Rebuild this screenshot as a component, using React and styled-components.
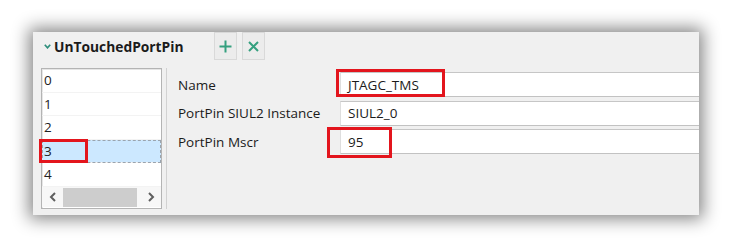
import React from "react";
import styled, { createGlobalStyle } from "styled-components";

const Global = createGlobalStyle`
  html, body { margin: 0; padding: 0; background: #ffffff; }
  body { font-family: "Open Sans", "Noto Sans", "Liberation Sans", sans-serif; }
`;

const Page = styled.div`
  width: 731px;
  height: 247px;
  padding: 32px 0 0 33px;
  box-sizing: border-box;
`;

const Panel = styled.div`
  width: 666px;
  height: 183px;
  background: #f0f0f0;
  box-shadow: 0 0 16px 4px rgba(0, 0, 0, 0.48);
  display: flex;
  flex-direction: column;
`;

const Header = styled.div`
  height: 36px;
  display: flex;
  align-items: flex-start;
  padding-left: 11px;
`;

const TitleWrap = styled.div`
  display: flex;
  align-items: center;
  height: 28px;
  width: 170px;
`;

const Chevron = styled.svg`
  width: 7px;
  height: 5px;
  margin-right: 3px;
  margin-top: 1px;
`;

const Title = styled.span`
  font-weight: 700;
  font-size: 13.8px;
  color: #1b1b1b;
`;

const Tools = styled.div`
  display: flex;
  gap: 5px;
`;

const ToolButton = styled.div`
  width: 23px;
  height: 28px;
  box-sizing: border-box;
  background: #ececec;
  border: 1px solid #d9d9d9;
  display: flex;
  align-items: center;
  justify-content: center;
`;

const Body = styled.div`
  display: flex;
  padding-left: 8px;
`;

const List = styled.div`
  width: 121px;
  height: 141px;
  box-sizing: border-box;
  border: 1px solid #b4b4b4;
  box-shadow: inset 1px 1px 0 #e6e6e6;
  background: #ffffff;
  display: flex;
  flex-direction: column;
`;

const Row = styled.div`
  position: relative;
  height: 23.5px;
  box-sizing: border-box;
  padding-left: 2px;
  display: flex;
  align-items: center;
  font-size: 13.5px;
  color: #222;
  border-bottom: 1px solid #f3f3f3;
  background: ${(p) => (p.$selected ? "#cce8ff" : "transparent")};
  outline: ${(p) => (p.$selected ? "1px dashed #9aa4ae" : "none")};
  outline-offset: -1px;
`;

const ScrollBar = styled.div`
  margin-top: auto;
  height: 20px;
  margin-bottom: 1px;
  display: flex;
  align-items: center;
  background: #f7f7f7;
`;

const ArrowBox = styled.div`
  width: 21px;
  height: 20px;
  display: flex;
  align-items: center;
  justify-content: center;
`;

const Thumb = styled.div`
  width: 74px;
  height: 19px;
  background: #cdcdcd;
`;

const Spacer = styled.div`
  flex: 1;
`;

const Divider = styled.div`
  width: 1px;
  height: 141px;
  margin-left: 4px;
  background: #d2d2d2;
`;

const Form = styled.div`
  flex: 1;
  margin-left: 11px;
  padding-top: 4px;
  display: grid;
  grid-template-columns: 162px 1fr;
  grid-auto-rows: 25px;
  row-gap: 3.5px;
  align-content: start;
`;

const Label = styled.div`
  display: flex;
  align-items: center;
  font-size: 13.5px;
  color: #1b1b1b;
`;

const Field = styled.div`
  position: relative;
  box-sizing: border-box;
  background: #ffffff;
  border-top: 1px solid #c6c6c6;
  border-bottom: 1px solid #c2c2c2;
  border-left: 1px solid #dedede;
  display: flex;
  align-items: center;
  padding-left: 7px;
  font-size: 13.5px;
  color: #1b1b1b;
`;

const Mark = styled.div`
  position: absolute;
  left: ${(p) => p.$l}px;
  top: ${(p) => p.$t}px;
  width: ${(p) => p.$w}px;
  height: ${(p) => p.$h}px;
  box-sizing: border-box;
  border: 3px solid #e3151d;
  pointer-events: none;
`;

const items = ["0", "1", "2", "3", "4"];

const fields = [
  { label: "Name", value: "JTAGC_TMS", mark: { l: -5, t: -4, w: 109, h: 28 } },
  { label: "PortPin SIUL2 Instance", value: "SIUL2_0" },
  { label: "PortPin Mscr", value: "95", mark: { l: -14, t: -3, w: 65, h: 31 } },
];

export default function App() {
  return (
    <>
      <Global />
      <Page>
        <Panel>
          <Header>
            <TitleWrap>
              <Chevron viewBox="0 0 7 5">
                <path d="M0.8 0.8 L3.5 3.8 L6.2 0.8" fill="none" stroke="#2f8f7c" strokeWidth="1.7" />
              </Chevron>
              <Title>UnTouchedPortPin</Title>
            </TitleWrap>
            <Tools>
              <ToolButton>
                <svg width="13" height="13" viewBox="0 0 13 13">
                  <path d="M6.5 0.5 V12.5 M0.5 6.5 H12.5" stroke="#35a07f" strokeWidth="2" />
                </svg>
              </ToolButton>
              <ToolButton>
                <svg width="11" height="11" viewBox="0 0 11 11">
                  <path d="M1 1 L10 10 M10 1 L1 10" stroke="#35a07f" strokeWidth="2" />
                </svg>
              </ToolButton>
            </Tools>
          </Header>
          <Body>
            <List>
              {items.map((it) => (
                <Row key={it} $selected={it === "3"}>
                  {it}
                  {it === "3" && <Mark $l={-3} $t={-1} $w={49} $h={24} />}
                </Row>
              ))}
              <ScrollBar>
                <ArrowBox>
                  <svg width="8" height="10" viewBox="0 0 8 10">
                    <path d="M6 1 L2 5 L6 9" fill="none" stroke="#5f5f5f" strokeWidth="2" />
                  </svg>
                </ArrowBox>
                <Thumb />
                <Spacer />
                <ArrowBox>
                  <svg width="8" height="10" viewBox="0 0 8 10">
                    <path d="M2 1 L6 5 L2 9" fill="none" stroke="#5f5f5f" strokeWidth="2" />
                  </svg>
                </ArrowBox>
              </ScrollBar>
            </List>
            <Divider />
            <Form>
              {fields.map((f) => (
                <React.Fragment key={f.label}>
                  <Label>{f.label}</Label>
                  <Field>
                    {f.value}
                    {f.mark && <Mark $l={f.mark.l} $t={f.mark.t} $w={f.mark.w} $h={f.mark.h} />}
                  </Field>
                </React.Fragment>
              ))}
            </Form>
          </Body>
        </Panel>
      </Page>
    </>
  );
}
